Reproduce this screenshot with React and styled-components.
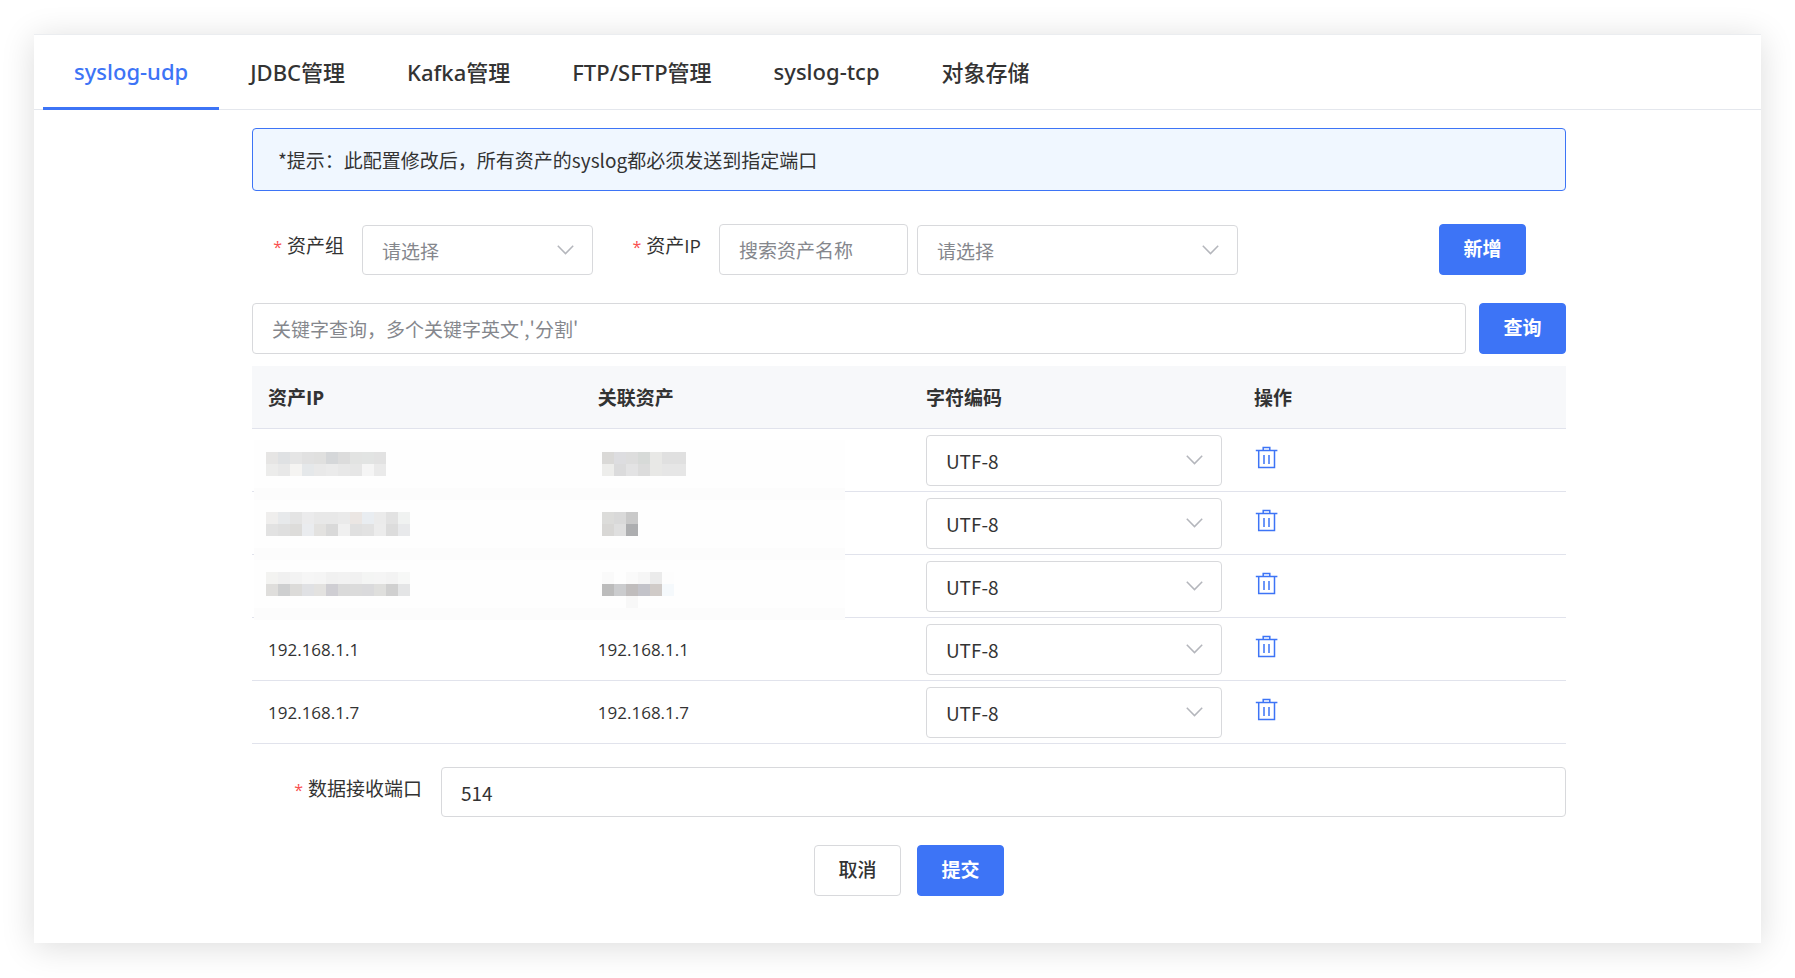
import React, { useState } from 'react';
import styled, { createGlobalStyle } from 'styled-components';

const GlobalStyle = createGlobalStyle`
  * {
    box-sizing: border-box;
  }
  body {
    margin: 0;
    background: #fff;
    color: #333;
    font-family: "Open Sans", "Noto Sans CJK SC", sans-serif;
    font-size: 19px;
  }
  button, input, select {
    font-family: "Noto Sans CJK SC", sans-serif;
    font-size: 19px;
    color: #333;
  }
`

const Card = styled.main`
  margin: 34px;
  padding-bottom: 47px;
  background: #fff;
  border-top: 1px solid #ebedf0;
  box-shadow: 0 4px 32px rgba(0, 0, 0, 0.14);
`

const Tabs = styled.nav`
  display: flex;
  height: 75px;
  padding-left: 9px;
  border-bottom: 1px solid #e4e7ed;
`

const Tab = styled.button`
  height: 75px;
  padding: 0 31px;
  border: none;
  border-bottom: 3px solid ${props => props.$active ? '#3d74f6' : 'transparent'};
  background: none;
  color: ${props => props.$active ? '#3d74f6' : '#333'};
  font-family: "Noto Sans", "Noto Sans CJK SC", sans-serif;
  font-size: 22px;
  font-weight: 500;
  white-space: nowrap;
  cursor: pointer;
`

const Content = styled.form`
  margin: 18px 195px 0 218px;
`

const Hint = styled.p`
  margin: 0 0 33px;
  padding: 1px 25px 0;
  border: 1px solid #3d74f6;
  border-radius: 4px;
  background: #f0f7ff;
  font-family: "Noto Sans CJK SC", sans-serif;
  line-height: 60px;
`

const AddRow = styled.div`
  display: grid;
  grid-template-columns: 110px 231fr 126px 189fr 9px 321fr 201fr 87px;
  align-items: end;
  padding-right: 40px;
  margin-bottom: 28px;
`

const Label = styled.label`
  align-self: start;
  padding-right: 18px;
  line-height: 44px;
  text-align: right;
  white-space: nowrap;

  &::before {
    content: "*";
    margin-right: 5px;
    color: #f9504f;
    font-size: 16px;
  }
`

const Input = styled.input`
  width: 100%;
  min-width: 0;
  height: ${props => props.$short ? '50px' : '51px'};
  padding: 0 19px;
  border: 1px solid #d8d9dc;
  border-radius: 4px;
  background: #fff;
  outline: none;

  &::placeholder {
    color: #85878d;
    opacity: 1;
  }
`

const SelectWrap = styled.div`
  position: relative;
  grid-column: ${props => props.$column || 'auto'};

  svg {
    position: absolute;
    top: 20px;
    right: 19px;
    pointer-events: none;
  }
`

const NativeSelect = styled.select`
  display: block;
  appearance: none;
  width: 100%;
  height: ${props => props.$short ? '50px' : '51px'};
  padding: 0 40px 0 19px;
  border: 1px solid #d8d9dc;
  border-radius: 4px;
  background: #fff;
  color: ${props => props.$empty ? '#85878d' : '#333'};
  outline: none;
`

const Button = styled.button`
  flex: none;
  grid-column: ${props => props.$column || 'auto'};
  width: 87px;
  height: 51px;
  padding: 0 0 4px;
  border: 1px solid ${props => props.$plain ? '#d8d9dc' : '#3d74f6'};
  border-radius: 4px;
  background: ${props => props.$plain ? '#fff' : '#3d74f6'};
  color: ${props => props.$plain ? '#333' : '#fff'};
  font-weight: ${props => props.$plain ? 500 : 700};
  cursor: pointer;
`

const SearchRow = styled.div`
  display: flex;
  gap: 13px;
  margin-bottom: 12px;
`

const TableWrap = styled.div`
  position: relative;
`

const Table = styled.table`
  width: 100%;
  table-layout: fixed;
  border-collapse: separate;
  border-spacing: 0;

  th, td {
    height: 63px;
    padding: 0 16px;
    border-bottom: 1px solid #e1e3ec;
    text-align: left;
  }
  th {
    background: #f7f8fa;
    font-weight: 700;
  }
  th:first-child {
    width: 25.1%;
  }
  td {
    font-size: 17px;
  }
`

const Mosaic = styled.svg`
  position: absolute;
  top: 74px;
  left: 2px;
`

const DeleteButton = styled.button`
  display: block;
  margin-bottom: 6px;
  padding: 0;
  border: none;
  background: none;
  line-height: 0;
  cursor: pointer;
`

const PortRow = styled.div`
  display: grid;
  grid-template-columns: 189px 1fr;
  margin: 23px 0 28px;
`

const PortLabel = styled(Label)`
  padding-right: 19px;
`

const Actions = styled.div`
  display: flex;
  justify-content: center;
  gap: 16px;
`

const tabs = ['syslog-udp', 'JDBC管理', 'Kafka管理', 'FTP/SFTP管理', 'syslog-tcp', '对象存储']

const rows = [
  { id: 1, ip: '', asset: '' },
  { id: 2, ip: '', asset: '' },
  { id: 3, ip: '', asset: '' },
  { id: 4, ip: '192.168.1.1', asset: '192.168.1.1' },
  { id: 5, ip: '192.168.1.7', asset: '192.168.1.7' }
]

// masked cells: start column, line and the colours of each 12px block
const masks = [
  { x: 1, y: 1, colors: ['#e6e5e4', '#dfe1e3', '#e5e5e5', '#e1e1e1', '#e0e0df', '#d5d7d9', '#dcdcdc', '#e2e3e2', '#e2e4e3', '#e2e2e2'] },
  { x: 1, y: 2, colors: ['#ececeb', '#e8e8e8', '#f5f4f2', '#e5e8ea', '#e9e9e9', '#ebebeb', '#e8e8e8', '#e6e6e6', '#f5f5f5', '#eaeaea'] },
  { x: 29, y: 1, colors: ['#dad9d7', '#dddde0', '#dddddd', '#d7dad8', '#e8e8e6', '#e0e0e0', '#e0e0e0'] },
  { x: 29, y: 2, colors: ['#ededeb', '#dbdbdc', '#e3e3e4', '#dcdcdc', '#e8e8e6', '#e6e6e6', '#e6e6e6'] },
  { x: 1, y: 6, colors: ['#efeeed', '#e7e9eb', '#e4e4e4', '#ebebec', '#e8e8e8', '#e8e8e8', '#eaeaea', '#ebe6e3', '#e9edf1', '#ebebeb', '#e2e2e2', '#f0f2f1'] },
  { x: 1, y: 7, colors: ['#e2e2e2', '#dfdfdf', '#dddcda', '#eaecef', '#e3e2e0', '#d9d9d9', '#f0f0f0', '#e0e0e0', '#e2e2e2', '#ececec', '#dcdcdc', '#e8e9eb'] },
  { x: 29, y: 6, colors: ['#dcdcda', '#d9d9d9', '#c9c9c9'] },
  { x: 29, y: 7, colors: ['#d8d7d5', '#dfdfdf', '#adaeb0'] },
  { x: 1, y: 11, colors: ['#f3f3f1', '#f0f0f0', '#f3f3f3', '#f6f6f6', '#f5f5f5', '#f1f1f1', '#f2f2f2', '#f1f1f1', '#f4f5f4', '#f5f5f5', '#f3f3f3', '#f7f8f7'] },
  { x: 1, y: 12, colors: ['#dfdedc', '#cecfd0', '#dcdbd9', '#e0e1e4', '#e3e2e0', '#cfced3', '#dadada', '#dbdbdb', '#dadadc', '#dfdfdd', '#d0d0d0', '#e4e5e6'] },
  { x: 29, y: 11, colors: ['#fafafa', '#fefefe', '#fafafa', '#f6f6f6', '#ebebeb', '#fdfdfd'] },
  { x: 29, y: 12, colors: ['#bcbcbc', '#cbccce', '#c0bdbd', '#c3c3c9', '#d0cbc8', '#f5f9fc'] },
  { x: 31, y: 13, colors: ['#f8f8f8'] }
]

function MaskedArea() {
  return (
    <Mosaic width="591" height="180" shapeRendering="crispEdges" aria-hidden="true">
      <rect width="591" height="180" fill="#fefefe" />
      {[48, 108, 168].map(y => <rect key={y} y={y} width="591" height="12" fill="#fcfcfc" />)}
      {masks.map(mask => mask.colors.map((color, i) => (
        <rect key={`${mask.x}-${mask.y}-${i}`} x={(mask.x + i) * 12} y={mask.y * 12} width="12" height="12" fill={color} />
      )))}
    </Mosaic>
  )
}

function Select({ children, column, ...rest }) {
  return (
    <SelectWrap $column={column}>
      <NativeSelect {...rest}>{children}</NativeSelect>
      <svg width="17" height="10" viewBox="0 0 17 10" fill="none" stroke="#b4b6bc" strokeWidth="1.5">
        <path d="M0.8 0.8 8.5 8.6 16.2 0.8" />
      </svg>
    </SelectWrap>
  )
}

function TrashIcon() {
  return (
    <svg width="24" height="24" viewBox="0 0 24 24" fill="none" stroke="#3d74f6" strokeWidth="1.5">
      <path d="M1.8 5.5H23.4M9.2 5.3V2.4H15.8V5.3M4.7 5.5V22.5H20.5V5.5M10 10V19M15 10V19" />
    </svg>
  )
}

export default function App() {
  const [active, setActive] = useState('syslog-udp')

  return (
    <>
      <GlobalStyle />
      <Card lang="zh-CN">
        <Tabs>
          {tabs.map(tab => (
            <Tab key={tab} type="button" $active={tab === active} onClick={() => setActive(tab)}>{tab}</Tab>
          ))}
        </Tabs>
        <Content onSubmit={e => e.preventDefault()}>
          <Hint>*提示：此配置修改后，所有资产的syslog都必须发送到指定端口</Hint>

          <AddRow>
            <Label htmlFor="group">资产组</Label>
            <Select id="group" $short $empty>
              <option>请选择</option>
            </Select>
            <Label htmlFor="asset-name">资产IP</Label>
            <Input id="asset-name" placeholder="搜索资产名称" />
            <Select column={6} aria-label="资产IP" $short $empty>
              <option>请选择</option>
            </Select>
            <Button type="button" $column={8}>新增</Button>
          </AddRow>

          <SearchRow>
            <Input aria-label="关键字查询" placeholder="关键字查询，多个关键字英文','分割'" />
            <Button type="button">查询</Button>
          </SearchRow>

          <TableWrap>
            <Table>
              <thead>
                <tr>
                  <th>资产IP</th>
                  <th>关联资产</th>
                  <th>字符编码</th>
                  <th>操作</th>
                </tr>
              </thead>
              <tbody>
                {rows.map(row => (
                  <tr key={row.id}>
                    <td>{row.ip}</td>
                    <td>{row.asset}</td>
                    <td>
                      <Select aria-label="字符编码">
                        <option>UTF-8</option>
                      </Select>
                    </td>
                    <td>
                      <DeleteButton type="button" aria-label="删除"><TrashIcon /></DeleteButton>
                    </td>
                  </tr>
                ))}
              </tbody>
            </Table>
            <MaskedArea />
          </TableWrap>

          <PortRow>
            <PortLabel htmlFor="port">数据接收端口</PortLabel>
            <Input id="port" defaultValue="514" $short />
          </PortRow>

          <Actions>
            <Button type="button" $plain>取消</Button>
            <Button type="submit">提交</Button>
          </Actions>
        </Content>
      </Card>
    </>
  )
}
